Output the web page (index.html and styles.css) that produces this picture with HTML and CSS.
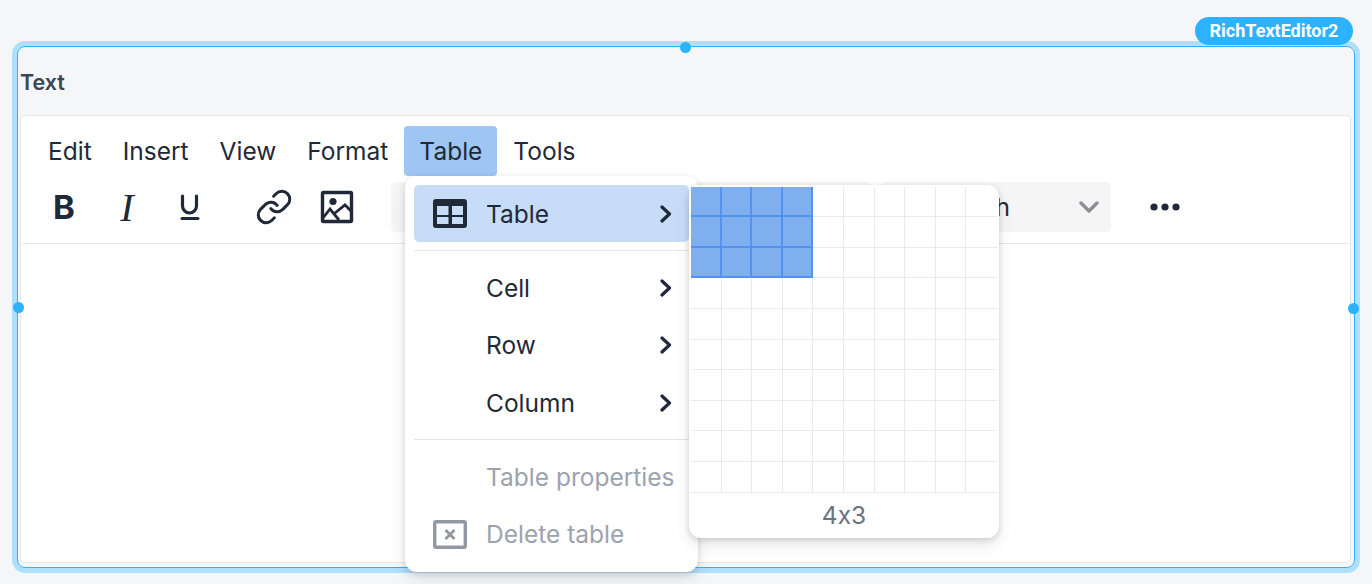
FILE: index.html
```html
<!DOCTYPE html>
<html lang="en">
<head>
<meta charset="utf-8">
<title>Rich text editor</title>
<link rel="stylesheet" href="styles.css">
</head>
<body>
<div class="page">
  <div class="frame">
    <div class="field-label">Text</div>
    <div class="editor">
      <div class="menubar">
        <div class="menubar-item">Edit</div>
        <div class="menubar-item">Insert</div>
        <div class="menubar-item">View</div>
        <div class="menubar-item">Format</div>
        <div class="menubar-item is-open">Table</div>
        <div class="menubar-item">Tools</div>
      </div>
      <div class="toolbar">
        <div class="tool-group">
          <div class="tool tool-bold">B</div>
          <div class="tool tool-italic">I</div>
          <div class="tool">
            <svg class="icon-34" viewBox="0 0 34 34"><path d="M9.500 6v10a7 7 0 0 0 14 0V6" fill="none" stroke="#1f2937" stroke-width="3.200" stroke-linecap="round"/><path d="M9 28.500h16" fill="none" stroke="#1f2937" stroke-width="3" stroke-linecap="round"/></svg>
          </div>
        </div>
        <div class="tool-group">
          <div class="tool">
            <svg class="icon-38" viewBox="0 0 24 24"><path d="M10 13a5 5 0 0 0 7.540.540l3-3a5 5 0 0 0-7.070-7.070l-1.720 1.710M14 11a5 5 0 0 0-7.540-.540l-3 3a5 5 0 0 0 7.070 7.070l1.710-1.710" fill="none" stroke="#1f2937" stroke-width="1.900" stroke-linecap="round" stroke-linejoin="round"/></svg>
          </div>
          <div class="tool">
            <svg class="icon-34" viewBox="0 0 34 34"><rect x="2.500" y="2.500" width="29" height="29" rx="1" fill="none" stroke="#1f2937" stroke-width="3.400"/><circle cx="13" cy="11.500" r="3.600" fill="#1f2937"/><path d="M3 28l7-9 9 11M15 23l10-8 7 7" fill="none" stroke="#1f2937" stroke-width="2.800"/></svg>
          </div>
        </div>
        <div class="select select-wide"></div>
        <div class="select select-format">
          <span>Paragraph</span>
          <svg class="chevron-down" viewBox="0 0 20 12"><path d="M2 2l8 8 8-8" fill="none" stroke="#8b8e94" stroke-width="3.400" stroke-linecap="round" stroke-linejoin="round"/></svg>
        </div>
        <div class="more">
          <svg class="icon-more" viewBox="0 0 30 8"><circle cx="4" cy="4" r="3.600"/><circle cx="15" cy="4" r="3.600"/><circle cx="26" cy="4" r="3.600"/></svg>
        </div>
      </div>
      <div class="content"></div>
    </div>
  </div>

  <div class="badge">RichTextEditor2</div>
  <span class="handle handle-top"></span>
  <span class="handle handle-left"></span>
  <span class="handle handle-right"></span>

  <div class="menu">
    <div class="menu-item is-active">
      <svg class="menu-icon" viewBox="0 0 34 29"><rect width="34" height="29" rx="3" fill="#1f2937"/><path d="M4 7h11.500v9H4zM19 7h11v9H19zM4 18h11.500v7H4zM19 18h11v7H19z" fill="#c6dcf7"/></svg>
      <span class="menu-text">Table</span>
      <svg class="chevron-right" viewBox="0 0 12 18"><path d="M2 2l7.500 7-7.500 7" fill="none" stroke="#1f2937" stroke-width="3.200" stroke-linecap="round" stroke-linejoin="round"/></svg>
    </div>
    <div class="menu-sep"></div>
    <div class="menu-item">
      <span class="menu-icon"></span>
      <span class="menu-text">Cell</span>
      <svg class="chevron-right" viewBox="0 0 12 18"><path d="M2 2l7.500 7-7.500 7" fill="none" stroke="#1f2937" stroke-width="3.200" stroke-linecap="round" stroke-linejoin="round"/></svg>
    </div>
    <div class="menu-item">
      <span class="menu-icon"></span>
      <span class="menu-text">Row</span>
      <svg class="chevron-right" viewBox="0 0 12 18"><path d="M2 2l7.500 7-7.500 7" fill="none" stroke="#1f2937" stroke-width="3.200" stroke-linecap="round" stroke-linejoin="round"/></svg>
    </div>
    <div class="menu-item">
      <span class="menu-icon"></span>
      <span class="menu-text">Column</span>
      <svg class="chevron-right" viewBox="0 0 12 18"><path d="M2 2l7.500 7-7.500 7" fill="none" stroke="#1f2937" stroke-width="3.200" stroke-linecap="round" stroke-linejoin="round"/></svg>
    </div>
    <div class="menu-sep"></div>
    <div class="menu-item is-disabled">
      <span class="menu-icon"></span>
      <span class="menu-text">Table properties</span>
    </div>
    <div class="menu-item is-disabled">
      <svg class="menu-icon" viewBox="0 0 34 29"><rect x="1.700" y="1.700" width="30.600" height="25.600" rx="1.500" fill="none" stroke="#9198a1" stroke-width="3.400"/><path d="M12.500 10l9 9M21.500 10l-9 9" fill="none" stroke="#9198a1" stroke-width="2.800"/></svg>
      <span class="menu-text">Delete table</span>
    </div>
  </div>

  <div class="submenu">
    <div class="picker">
      <span class="cell on"></span><span class="cell on"></span><span class="cell on"></span><span class="cell on"></span><span class="cell"></span><span class="cell"></span><span class="cell"></span><span class="cell"></span><span class="cell"></span><span class="cell"></span>
      <span class="cell on"></span><span class="cell on"></span><span class="cell on"></span><span class="cell on"></span><span class="cell"></span><span class="cell"></span><span class="cell"></span><span class="cell"></span><span class="cell"></span><span class="cell"></span>
      <span class="cell on"></span><span class="cell on"></span><span class="cell on"></span><span class="cell on"></span><span class="cell"></span><span class="cell"></span><span class="cell"></span><span class="cell"></span><span class="cell"></span><span class="cell"></span>
      <span class="cell"></span><span class="cell"></span><span class="cell"></span><span class="cell"></span><span class="cell"></span><span class="cell"></span><span class="cell"></span><span class="cell"></span><span class="cell"></span><span class="cell"></span>
      <span class="cell"></span><span class="cell"></span><span class="cell"></span><span class="cell"></span><span class="cell"></span><span class="cell"></span><span class="cell"></span><span class="cell"></span><span class="cell"></span><span class="cell"></span>
      <span class="cell"></span><span class="cell"></span><span class="cell"></span><span class="cell"></span><span class="cell"></span><span class="cell"></span><span class="cell"></span><span class="cell"></span><span class="cell"></span><span class="cell"></span>
      <span class="cell"></span><span class="cell"></span><span class="cell"></span><span class="cell"></span><span class="cell"></span><span class="cell"></span><span class="cell"></span><span class="cell"></span><span class="cell"></span><span class="cell"></span>
      <span class="cell"></span><span class="cell"></span><span class="cell"></span><span class="cell"></span><span class="cell"></span><span class="cell"></span><span class="cell"></span><span class="cell"></span><span class="cell"></span><span class="cell"></span>
      <span class="cell"></span><span class="cell"></span><span class="cell"></span><span class="cell"></span><span class="cell"></span><span class="cell"></span><span class="cell"></span><span class="cell"></span><span class="cell"></span><span class="cell"></span>
      <span class="cell"></span><span class="cell"></span><span class="cell"></span><span class="cell"></span><span class="cell"></span><span class="cell"></span><span class="cell"></span><span class="cell"></span><span class="cell"></span><span class="cell"></span>
    </div>
    <div class="picker-size">4x3</div>
  </div>
</div>
</body>
</html>
```
FILE: styles.css
```css
* { box-sizing: border-box; }

html, body {
  margin: 0;
  height: 100%;
  overflow: hidden;
  background: #f5f6f8;
}

body {
  font-family: Inter, "Liberation Sans", sans-serif;
  font-feature-settings: "calt" 0;
  color: #1f2937;
}

.page {
  position: relative;
  width: 1372px;
  height: 584px;
  padding: 46px 17px 16px;
}

.frame {
  height: 522px;
  padding: 20px 3px 4px 2px;
  border: 1px solid #2cb2ff;
  border-radius: 8px;
  box-shadow: 0 0 0 5px #aee0fd;
  display: flex;
  flex-direction: column;
}

.field-label {
  height: 30px;
  margin: 0 0 18px;
  font-size: 21.5px;
  line-height: 30px;
  font-weight: 600;
  color: #3d4454;
}

.editor {
  flex: 1;
  display: flex;
  flex-direction: column;
  padding: 0 1px;
  background: #fff;
  border: 1px solid #e5e7eb;
  border-radius: 5px;
}

.menubar {
  display: flex;
  gap: 1px;
  height: 60px;
  padding: 10px 0 0 11px;
}

.menubar-item {
  height: 50px;
  padding: 0 15px;
  font-size: 24.500px;
  line-height: 50px;
  border-radius: 4px;
}

.menubar-item.is-open {
  background: #9fc6f3;
}

.toolbar {
  display: flex;
  align-items: center;
  height: 68px;
  padding: 6px 0 11px 17px;
  border-bottom: 1px solid #e5e7eb;
}

.tool-group {
  display: flex;
  gap: 13px;
  margin-right: 34px;
}

.tool-group + .tool-group {
  margin-right: 29px;
}

.tool {
  width: 50px;
  height: 50px;
  display: flex;
  align-items: center;
  justify-content: center;
}

.tool-bold {
  font-size: 33px;
  font-weight: 700;
}

.tool-italic {
  font-family: "Liberation Serif", serif;
  font-style: italic;
  font-size: 40px;
}

.icon-34 {
  width: 34px;
  height: 34px;
}

.icon-38 {
  width: 38px;
  height: 38px;
}

.select {
  height: 50px;
  background: #f5f5f5;
  border-radius: 5px;
}

.select-wide {
  width: 480px;
  margin-right: 10px;
}

.select-format {
  width: 230px;
  display: flex;
  align-items: center;
  justify-content: space-between;
  padding: 0 12px 0 9px;
  font-size: 24.500px;
}

.chevron-down {
  width: 20px;
  height: 12px;
}

.more {
  margin-left: 39px;
  display: flex;
}

.icon-more {
  width: 30px;
  height: 8px;
  fill: #1f2937;
}

.content {
  flex: 1;
}

.badge {
  position: absolute;
  left: 1195px;
  top: 17px;
  width: 158px;
  height: 28px;
  border-radius: 14px;
  background: #2cb2ff;
  color: #fff;
  font-family: Roboto, sans-serif;
  font-weight: 700;
  font-size: 18px;
  line-height: 28px;
  text-align: center;
}

.handle {
  position: absolute;
  width: 11px;
  height: 11px;
  border-radius: 50%;
  background: #2cb2ff;
}

.handle-top { left: 680px; top: 42px; }
.handle-left { left: 13px; top: 302px; }
.handle-right { left: 1348px; top: 303px; }

.menu {
  position: absolute;
  left: 405px;
  top: 176px;
  width: 293px;
  height: 396px;
  padding: 9px;
  background: #fff;
  border-radius: 12px;
  box-shadow: 0 2px 6px rgba(0, 0, 0, .14), 0 8px 16px rgba(0, 0, 0, .08);
}

.menu-item {
  display: flex;
  align-items: center;
  height: 57.330px;
  padding: 0 17px 0 19px;
  font-size: 24.500px;
  border-radius: 5px;
  white-space: nowrap;
}

.menu-item.is-active {
  background: #c6dcf7;
}

.menu-item.is-disabled {
  color: #9ca3af;
}

.menu-icon {
  flex: none;
  width: 34px;
  height: 29px;
  margin-right: 19px;
}

.menu-text {
  flex: 1;
}

.chevron-right {
  flex: none;
  width: 12px;
  height: 18px;
}

.menu-sep {
  height: 1px;
  margin: 8px 0;
  background: #e2e4e8;
}

.submenu {
  position: absolute;
  left: 689px;
  top: 185px;
  width: 310px;
  height: 353px;
  padding: 1.600px 2px 0;
  background: #fff;
  border-radius: 12px;
  box-shadow: 0 2px 6px rgba(0, 0, 0, .16), 0 8px 16px rgba(0, 0, 0, .08);
  display: flex;
  flex-direction: column;
}

.picker {
  display: grid;
  grid-template-columns: repeat(10, 1fr);
  grid-template-rows: repeat(10, 1fr);
  width: 306px;
  height: 306px;
  flex: none;
}

.cell {
  border-right: 1px solid #e9e9ea;
  border-bottom: 1px solid #e9e9ea;
}

.cell:nth-child(10n) {
  border-right: 0;
}

.cell.on {
  background: #80aff0;
  border-right: 2px solid #5592ee;
  border-bottom: 2px solid #5592ee;
}

.picker-size {
  flex: 1;
  display: flex;
  align-items: center;
  justify-content: center;
  font-size: 24.500px;
  color: #6b7280;
}
```
